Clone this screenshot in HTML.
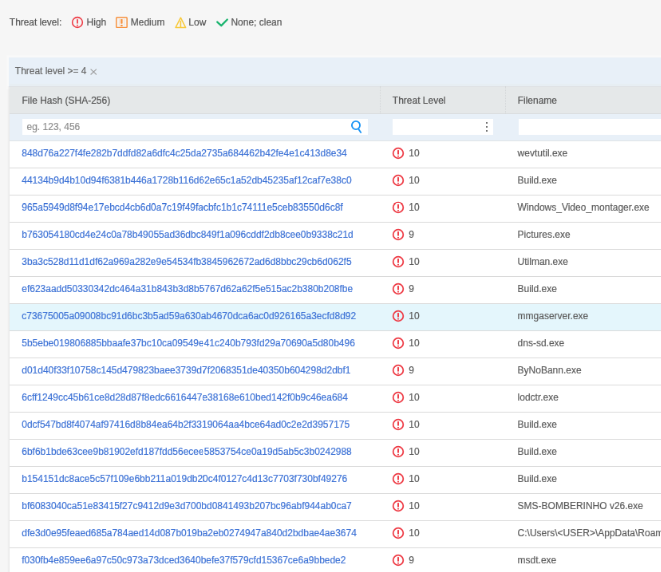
<!DOCTYPE html>
<html><head><meta charset="utf-8">
<style>
*{box-sizing:border-box;margin:0;padding:0}
html,body{width:661px;height:572px;overflow:hidden;background:#f6f6f6}
#wrap{position:absolute;left:0;top:0;width:830px;height:720px;transform:scale(0.798);transform-origin:0 0;will-change:transform;background:#f6f6f6;font-family:"Liberation Sans",sans-serif;font-size:12px;color:#555;overflow:hidden;-webkit-text-stroke-width:0.2px}
.a{position:absolute}
.t{position:absolute;white-space:nowrap;line-height:14px}
</style></head><body><div id="wrap">
<div class="t" style="left:11.86px;top:21.30px;color:#555;transform:scaleY(1.04);transform-origin:0 11.16px;letter-spacing:-0.05px">Threat level:</div>
<svg class="a" style="left:87.12px;top:17.88px" width="20" height="20" viewBox="0 0 20 20"><circle cx="10" cy="10" r="6.36" fill="none" stroke="#ee3a44" stroke-width="1.57"/><rect x="9.14" y="6.14" width="1.73" height="5.36" fill="#ee3a44"/><rect x="9.14" y="12.93" width="1.73" height="1.50" fill="#ee3a44"/></svg>
<div class="t" style="left:108.60px;top:21.30px;color:#555;transform:scaleY(1.04);transform-origin:0 11.16px;">High</div>
<svg class="a" style="left:145.49px;top:20.93px" width="14.91" height="14.16" viewBox="0 0 14.91 14.16"><rect x="0.75" y="0.75" width="13.41" height="12.66" rx="1" fill="none" stroke="#f7923f" stroke-width="1.50"/><rect x="3.89" y="2.88" width="1" height="8.40" fill="#f7923f" opacity="0.25"/><rect x="10.15" y="2.88" width="1" height="8.40" fill="#f7923f" opacity="0.25"/><rect x="6.19" y="2.88" width="2.4" height="5.76" rx="0.6" fill="#f7923f"/><rect x="5.89" y="9.90" width="3" height="2" rx="1" fill="#f7923f"/></svg>
<div class="t" style="left:163.74px;top:21.30px;color:#555;transform:scaleY(1.04);transform-origin:0 11.16px;">Medium</div>
<svg class="a" style="left:215.54px;top:17.54px" width="22" height="20" viewBox="0 0 22 20"><path d="M10.40 4.14 L16.67 16.55 L4.01 16.55 Z" fill="none" stroke="#f8c93a" stroke-width="1.50" stroke-linejoin="round"/><path d="M10.40 7.90 L10.40 16.04" stroke="#f8c93a" stroke-width="1.6"/></svg>
<div class="t" style="left:236.29px;top:21.30px;color:#555;transform:scaleY(1.04);transform-origin:0 11.16px;">Low</div>
<svg class="a" style="left:268.17px;top:17.54px" width="20" height="20" viewBox="0 0 20 20"><path d="M4.26 9.53 L9.27 14.16 L16.79 6.52" fill="none" stroke="#19b46e" stroke-width="2.32" stroke-linecap="round" stroke-linejoin="round"/></svg>
<div class="t" style="left:289.42px;top:21.30px;color:#555;transform:scaleY(1.04);transform-origin:0 11.16px;">None; clean</div>
<div class="a" style="left:11.15px;top:71.68px;width:900px;height:37.32px;background:#e8f0f8;box-shadow:0 0 0 2.5px #f9f9f9"></div>
<div class="t" style="left:18.87px;top:81.82px;color:#666;transform:scaleY(1.04);transform-origin:0 11.16px;letter-spacing:-0.03px">Threat level &gt;= 4</div>
<svg class="a" style="left:112.84px;top:85.78px" width="8.59" height="8.08" viewBox="0 0 8.59 8.08"><path d="M0.6 0.6 L7.99 7.48 M7.99 0.6 L0.6 7.48" stroke="#9d9d9d" stroke-width="1.15"/></svg>
<div class="a" style="left:9.41px;top:108.00px;width:4px;height:900px;background:linear-gradient(to right, rgba(0,0,0,0), rgba(0,0,0,0.035) 45%, rgba(0,0,0,0.085))"></div>
<div class="a" style="left:12.41px;top:104.50px;width:900px;height:3.5px;background:#e7eef3"></div>
<div class="a" style="left:12.41px;top:108.00px;width:900px;height:34.98px;background:#e5e8e9;border-bottom:1px solid #d9dcde;border-top:1px solid #dfe2e4"></div>
<div class="a" style="left:475.69px;top:108.00px;width:1px;height:33.98px;border-left:1px dotted #d3d6d8"></div>
<div class="a" style="left:632.96px;top:108.00px;width:1px;height:33.98px;border-left:1px dotted #d3d6d8"></div>
<div class="t" style="left:27.52px;top:119.04px;color:#555;transform:scaleY(1.04);transform-origin:0 11.16px;">File Hash (SHA-256)</div>
<div class="t" style="left:491.81px;top:119.04px;color:#555;transform:scaleY(1.04);transform-origin:0 11.16px;">Threat Level</div>
<div class="t" style="left:648.70px;top:119.04px;color:#555;transform:scaleY(1.04);transform-origin:0 11.16px;">Filename</div>
<div class="a" style="left:12.41px;top:142.98px;width:900px;height:33.59px;background:#e8f0f8;border-bottom:1px solid #dfe3e6"></div>
<div class="a" style="left:28.45px;top:149.00px;width:432.58px;height:19.67px;background:#fff"></div>
<div class="a" style="left:492.48px;top:149.00px;width:125.38px;height:19.67px;background:#fff"></div>
<div class="a" style="left:649.50px;top:149.00px;width:478.32px;height:19.67px;background:#fff"></div>
<div class="t" style="left:33.53px;top:152.00px;color:#8e8e8e;transform:scaleY(1.04);transform-origin:0 11.16px;">eg. 123, 456</div>
<svg class="a" style="left:436.12px;top:146.64px" width="20" height="20" viewBox="0 0 20 20"><circle cx="10" cy="10" r="5.07" fill="none" stroke="#1793f5" stroke-width="1.88"/><path d="M13.63 15.26 L16.14 19.02" stroke="#1793f5" stroke-width="1.88" stroke-linecap="round"/></svg>
<div class="a" style="left:608.84px;top:152.89px;width:2.5px;height:2.5px;background:#747474"></div>
<div class="a" style="left:608.84px;top:157.77px;width:2.5px;height:2.5px;background:#747474"></div>
<div class="a" style="left:608.84px;top:162.53px;width:2.5px;height:2.5px;background:#747474"></div>
<div class="a" style="left:12.41px;top:176.57px;width:900px;height:34.21px;background:#fff;border-bottom:1px solid #dadada"></div>
<div class="t" style="left:27.27px;top:184.83px;color:#3e73d6;transform:scaleY(1.04);transform-origin:0 11.16px;letter-spacing:-0.014px">848d76a227f4fe282b7ddfd82a6dfc4c25da2735a684462b42fe4e1c413d8e34</div>
<svg class="a" style="left:489.00px;top:181.60px" width="20" height="20" viewBox="0 0 20 20"><circle cx="10" cy="10" r="6.33" fill="none" stroke="#ee3a44" stroke-width="1.75"/><rect x="9.04" y="6.11" width="1.93" height="5.40" fill="#ee3a44"/><rect x="9.04" y="12.95" width="1.93" height="1.51" fill="#ee3a44"/></svg>
<div class="t" style="left:512.36px;top:184.83px;color:#5a5a5a;transform:scaleY(1.04);transform-origin:0 11.16px;">10</div>
<div class="t" style="left:648.57px;top:184.83px;color:#5c5c5c;transform:scaleY(1.04);transform-origin:0 11.16px;">wevtutil.exe</div>
<div class="a" style="left:12.41px;top:210.78px;width:900px;height:34px;background:#fff;border-bottom:1px solid #dadada"></div>
<div class="t" style="left:27.27px;top:218.83px;color:#3e73d6;transform:scaleY(1.04);transform-origin:0 11.16px;letter-spacing:-0.014px">44134b9d4b10d94f6381b446a1728b116d62e65c1a52db45235af12caf7e38c0</div>
<svg class="a" style="left:489.00px;top:215.60px" width="20" height="20" viewBox="0 0 20 20"><circle cx="10" cy="10" r="6.33" fill="none" stroke="#ee3a44" stroke-width="1.75"/><rect x="9.04" y="6.11" width="1.93" height="5.40" fill="#ee3a44"/><rect x="9.04" y="12.95" width="1.93" height="1.51" fill="#ee3a44"/></svg>
<div class="t" style="left:512.36px;top:218.83px;color:#5a5a5a;transform:scaleY(1.04);transform-origin:0 11.16px;">10</div>
<div class="t" style="left:648.57px;top:218.83px;color:#5c5c5c;transform:scaleY(1.04);transform-origin:0 11.16px;">Build.exe</div>
<div class="a" style="left:12.41px;top:244.78px;width:900px;height:34px;background:#fff;border-bottom:1px solid #dadada"></div>
<div class="t" style="left:27.27px;top:252.83px;color:#3e73d6;transform:scaleY(1.04);transform-origin:0 11.16px;letter-spacing:-0.014px">965a5949d8f94e17ebcd4cb6d0a7c19f49facbfc1b1c74111e5ceb83550d6c8f</div>
<svg class="a" style="left:489.00px;top:249.60px" width="20" height="20" viewBox="0 0 20 20"><circle cx="10" cy="10" r="6.33" fill="none" stroke="#ee3a44" stroke-width="1.75"/><rect x="9.04" y="6.11" width="1.93" height="5.40" fill="#ee3a44"/><rect x="9.04" y="12.95" width="1.93" height="1.51" fill="#ee3a44"/></svg>
<div class="t" style="left:512.36px;top:252.83px;color:#5a5a5a;transform:scaleY(1.04);transform-origin:0 11.16px;">10</div>
<div class="t" style="left:648.57px;top:252.83px;color:#5c5c5c;transform:scaleY(1.04);transform-origin:0 11.16px;">Windows_Video_montager.exe</div>
<div class="a" style="left:12.41px;top:278.78px;width:900px;height:34px;background:#fff;border-bottom:1px solid #dadada"></div>
<div class="t" style="left:27.27px;top:286.83px;color:#3e73d6;transform:scaleY(1.04);transform-origin:0 11.16px;letter-spacing:-0.014px">b763054180cd4e24c0a78b49055ad36dbc849f1a096cddf2db8cee0b9338c21d</div>
<svg class="a" style="left:489.00px;top:283.60px" width="20" height="20" viewBox="0 0 20 20"><circle cx="10" cy="10" r="6.33" fill="none" stroke="#ee3a44" stroke-width="1.75"/><rect x="9.04" y="6.11" width="1.93" height="5.40" fill="#ee3a44"/><rect x="9.04" y="12.95" width="1.93" height="1.51" fill="#ee3a44"/></svg>
<div class="t" style="left:512.36px;top:286.83px;color:#5a5a5a;transform:scaleY(1.04);transform-origin:0 11.16px;">9</div>
<div class="t" style="left:648.57px;top:286.83px;color:#5c5c5c;transform:scaleY(1.04);transform-origin:0 11.16px;">Pictures.exe</div>
<div class="a" style="left:12.41px;top:312.78px;width:900px;height:34px;background:#fff;border-bottom:1px solid #dadada"></div>
<div class="t" style="left:27.27px;top:320.83px;color:#3e73d6;transform:scaleY(1.04);transform-origin:0 11.16px;letter-spacing:-0.014px">3ba3c528d11d1df62a969a282e9e54534fb3845962672ad6d8bbc29cb6d062f5</div>
<svg class="a" style="left:489.00px;top:317.60px" width="20" height="20" viewBox="0 0 20 20"><circle cx="10" cy="10" r="6.33" fill="none" stroke="#ee3a44" stroke-width="1.75"/><rect x="9.04" y="6.11" width="1.93" height="5.40" fill="#ee3a44"/><rect x="9.04" y="12.95" width="1.93" height="1.51" fill="#ee3a44"/></svg>
<div class="t" style="left:512.36px;top:320.83px;color:#5a5a5a;transform:scaleY(1.04);transform-origin:0 11.16px;">10</div>
<div class="t" style="left:648.57px;top:320.83px;color:#5c5c5c;transform:scaleY(1.04);transform-origin:0 11.16px;">Utilman.exe</div>
<div class="a" style="left:12.41px;top:346.78px;width:900px;height:34px;background:#fff;border-bottom:1px solid #dadada"></div>
<div class="t" style="left:27.27px;top:354.83px;color:#3e73d6;transform:scaleY(1.04);transform-origin:0 11.16px;letter-spacing:-0.014px">ef623aadd50330342dc464a31b843b3d8b5767d62a62f5e515ac2b380b208fbe</div>
<svg class="a" style="left:489.00px;top:351.60px" width="20" height="20" viewBox="0 0 20 20"><circle cx="10" cy="10" r="6.33" fill="none" stroke="#ee3a44" stroke-width="1.75"/><rect x="9.04" y="6.11" width="1.93" height="5.40" fill="#ee3a44"/><rect x="9.04" y="12.95" width="1.93" height="1.51" fill="#ee3a44"/></svg>
<div class="t" style="left:512.36px;top:354.83px;color:#5a5a5a;transform:scaleY(1.04);transform-origin:0 11.16px;">9</div>
<div class="t" style="left:648.57px;top:354.83px;color:#5c5c5c;transform:scaleY(1.04);transform-origin:0 11.16px;">Build.exe</div>
<div class="a" style="left:12.41px;top:380.78px;width:900px;height:34px;background:#e4f6fc;border-bottom:1px solid #dadada"></div>
<div class="t" style="left:27.27px;top:388.83px;color:#3e73d6;transform:scaleY(1.04);transform-origin:0 11.16px;letter-spacing:-0.014px">c73675005a09008bc91d6bc3b5ad59a630ab4670dca6ac0d926165a3ecfd8d92</div>
<svg class="a" style="left:489.00px;top:385.60px" width="20" height="20" viewBox="0 0 20 20"><circle cx="10" cy="10" r="6.33" fill="none" stroke="#ee3a44" stroke-width="1.75"/><rect x="9.04" y="6.11" width="1.93" height="5.40" fill="#ee3a44"/><rect x="9.04" y="12.95" width="1.93" height="1.51" fill="#ee3a44"/></svg>
<div class="t" style="left:512.36px;top:388.83px;color:#5a5a5a;transform:scaleY(1.04);transform-origin:0 11.16px;">10</div>
<div class="t" style="left:648.57px;top:388.83px;color:#5c5c5c;transform:scaleY(1.04);transform-origin:0 11.16px;">mmgaserver.exe</div>
<div class="a" style="left:12.41px;top:414.78px;width:900px;height:34px;background:#fff;border-bottom:1px solid #dadada"></div>
<div class="t" style="left:27.27px;top:422.83px;color:#3e73d6;transform:scaleY(1.04);transform-origin:0 11.16px;letter-spacing:-0.014px">5b5ebe019806885bbaafe37bc10ca09549e41c240b793fd29a70690a5d80b496</div>
<svg class="a" style="left:489.00px;top:419.60px" width="20" height="20" viewBox="0 0 20 20"><circle cx="10" cy="10" r="6.33" fill="none" stroke="#ee3a44" stroke-width="1.75"/><rect x="9.04" y="6.11" width="1.93" height="5.40" fill="#ee3a44"/><rect x="9.04" y="12.95" width="1.93" height="1.51" fill="#ee3a44"/></svg>
<div class="t" style="left:512.36px;top:422.83px;color:#5a5a5a;transform:scaleY(1.04);transform-origin:0 11.16px;">10</div>
<div class="t" style="left:648.57px;top:422.83px;color:#5c5c5c;transform:scaleY(1.04);transform-origin:0 11.16px;">dns-sd.exe</div>
<div class="a" style="left:12.41px;top:448.78px;width:900px;height:34px;background:#fff;border-bottom:1px solid #dadada"></div>
<div class="t" style="left:27.27px;top:456.83px;color:#3e73d6;transform:scaleY(1.04);transform-origin:0 11.16px;letter-spacing:-0.014px">d01d40f33f10758c145d479823baee3739d7f2068351de40350b604298d2dbf1</div>
<svg class="a" style="left:489.00px;top:453.60px" width="20" height="20" viewBox="0 0 20 20"><circle cx="10" cy="10" r="6.33" fill="none" stroke="#ee3a44" stroke-width="1.75"/><rect x="9.04" y="6.11" width="1.93" height="5.40" fill="#ee3a44"/><rect x="9.04" y="12.95" width="1.93" height="1.51" fill="#ee3a44"/></svg>
<div class="t" style="left:512.36px;top:456.83px;color:#5a5a5a;transform:scaleY(1.04);transform-origin:0 11.16px;">9</div>
<div class="t" style="left:648.57px;top:456.83px;color:#5c5c5c;transform:scaleY(1.04);transform-origin:0 11.16px;">ByNoBann.exe</div>
<div class="a" style="left:12.41px;top:482.78px;width:900px;height:34px;background:#fff;border-bottom:1px solid #dadada"></div>
<div class="t" style="left:27.27px;top:490.83px;color:#3e73d6;transform:scaleY(1.04);transform-origin:0 11.16px;letter-spacing:-0.014px">6cff1249cc45b61ce8d28d87f8edc6616447e38168e610bed142f0b9c46ea684</div>
<svg class="a" style="left:489.00px;top:487.60px" width="20" height="20" viewBox="0 0 20 20"><circle cx="10" cy="10" r="6.33" fill="none" stroke="#ee3a44" stroke-width="1.75"/><rect x="9.04" y="6.11" width="1.93" height="5.40" fill="#ee3a44"/><rect x="9.04" y="12.95" width="1.93" height="1.51" fill="#ee3a44"/></svg>
<div class="t" style="left:512.36px;top:490.83px;color:#5a5a5a;transform:scaleY(1.04);transform-origin:0 11.16px;">10</div>
<div class="t" style="left:648.57px;top:490.83px;color:#5c5c5c;transform:scaleY(1.04);transform-origin:0 11.16px;">lodctr.exe</div>
<div class="a" style="left:12.41px;top:516.78px;width:900px;height:34px;background:#fff;border-bottom:1px solid #dadada"></div>
<div class="t" style="left:27.27px;top:524.83px;color:#3e73d6;transform:scaleY(1.04);transform-origin:0 11.16px;letter-spacing:-0.014px">0dcf547bd8f4074af97416d8b84ea64b2f3319064aa4bce64ad0c2e2d3957175</div>
<svg class="a" style="left:489.00px;top:521.60px" width="20" height="20" viewBox="0 0 20 20"><circle cx="10" cy="10" r="6.33" fill="none" stroke="#ee3a44" stroke-width="1.75"/><rect x="9.04" y="6.11" width="1.93" height="5.40" fill="#ee3a44"/><rect x="9.04" y="12.95" width="1.93" height="1.51" fill="#ee3a44"/></svg>
<div class="t" style="left:512.36px;top:524.83px;color:#5a5a5a;transform:scaleY(1.04);transform-origin:0 11.16px;">10</div>
<div class="t" style="left:648.57px;top:524.83px;color:#5c5c5c;transform:scaleY(1.04);transform-origin:0 11.16px;">Build.exe</div>
<div class="a" style="left:12.41px;top:550.78px;width:900px;height:34px;background:#fff;border-bottom:1px solid #dadada"></div>
<div class="t" style="left:27.27px;top:558.83px;color:#3e73d6;transform:scaleY(1.04);transform-origin:0 11.16px;letter-spacing:-0.014px">6bf6b1bde63cee9b81902efd187fdd56ecee5853754ce0a19d5ab5c3b0242988</div>
<svg class="a" style="left:489.00px;top:555.60px" width="20" height="20" viewBox="0 0 20 20"><circle cx="10" cy="10" r="6.33" fill="none" stroke="#ee3a44" stroke-width="1.75"/><rect x="9.04" y="6.11" width="1.93" height="5.40" fill="#ee3a44"/><rect x="9.04" y="12.95" width="1.93" height="1.51" fill="#ee3a44"/></svg>
<div class="t" style="left:512.36px;top:558.83px;color:#5a5a5a;transform:scaleY(1.04);transform-origin:0 11.16px;">10</div>
<div class="t" style="left:648.57px;top:558.83px;color:#5c5c5c;transform:scaleY(1.04);transform-origin:0 11.16px;">Build.exe</div>
<div class="a" style="left:12.41px;top:584.78px;width:900px;height:34px;background:#fff;border-bottom:1px solid #dadada"></div>
<div class="t" style="left:27.27px;top:592.83px;color:#3e73d6;transform:scaleY(1.04);transform-origin:0 11.16px;letter-spacing:-0.014px">b154151dc8ace5c57f109e6bb211a019db20c4f0127c4d13c7703f730bf49276</div>
<svg class="a" style="left:489.00px;top:589.60px" width="20" height="20" viewBox="0 0 20 20"><circle cx="10" cy="10" r="6.33" fill="none" stroke="#ee3a44" stroke-width="1.75"/><rect x="9.04" y="6.11" width="1.93" height="5.40" fill="#ee3a44"/><rect x="9.04" y="12.95" width="1.93" height="1.51" fill="#ee3a44"/></svg>
<div class="t" style="left:512.36px;top:592.83px;color:#5a5a5a;transform:scaleY(1.04);transform-origin:0 11.16px;">10</div>
<div class="t" style="left:648.57px;top:592.83px;color:#5c5c5c;transform:scaleY(1.04);transform-origin:0 11.16px;">Build.exe</div>
<div class="a" style="left:12.41px;top:618.78px;width:900px;height:34px;background:#fff;border-bottom:1px solid #dadada"></div>
<div class="t" style="left:27.27px;top:626.83px;color:#3e73d6;transform:scaleY(1.04);transform-origin:0 11.16px;letter-spacing:-0.014px">bf6083040ca51e83415f27c9412d9e3d700bd0841493b207bc96abf944ab0ca7</div>
<svg class="a" style="left:489.00px;top:623.60px" width="20" height="20" viewBox="0 0 20 20"><circle cx="10" cy="10" r="6.33" fill="none" stroke="#ee3a44" stroke-width="1.75"/><rect x="9.04" y="6.11" width="1.93" height="5.40" fill="#ee3a44"/><rect x="9.04" y="12.95" width="1.93" height="1.51" fill="#ee3a44"/></svg>
<div class="t" style="left:512.36px;top:626.83px;color:#5a5a5a;transform:scaleY(1.04);transform-origin:0 11.16px;">10</div>
<div class="t" style="left:648.57px;top:626.83px;color:#5c5c5c;transform:scaleY(1.04);transform-origin:0 11.16px;">SMS-BOMBERINHO v26.exe</div>
<div class="a" style="left:12.41px;top:652.78px;width:900px;height:34px;background:#fff;border-bottom:1px solid #dadada"></div>
<div class="t" style="left:27.27px;top:660.83px;color:#3e73d6;transform:scaleY(1.04);transform-origin:0 11.16px;letter-spacing:-0.014px">dfe3d0e95feaed685a784aed14d087b019ba2eb0274947a840d2bdbae4ae3674</div>
<svg class="a" style="left:489.00px;top:657.60px" width="20" height="20" viewBox="0 0 20 20"><circle cx="10" cy="10" r="6.33" fill="none" stroke="#ee3a44" stroke-width="1.75"/><rect x="9.04" y="6.11" width="1.93" height="5.40" fill="#ee3a44"/><rect x="9.04" y="12.95" width="1.93" height="1.51" fill="#ee3a44"/></svg>
<div class="t" style="left:512.36px;top:660.83px;color:#5a5a5a;transform:scaleY(1.04);transform-origin:0 11.16px;">10</div>
<div class="t" style="left:648.57px;top:660.83px;color:#5c5c5c;transform:scaleY(1.04);transform-origin:0 11.16px;">C:\Users\&lt;USER&gt;\AppData\Roaming\Microsoft\Windows\svchost.exe</div>
<div class="a" style="left:12.41px;top:686.78px;width:900px;height:34px;background:#fff;border-bottom:1px solid #dadada"></div>
<div class="t" style="left:27.27px;top:694.83px;color:#3e73d6;transform:scaleY(1.04);transform-origin:0 11.16px;letter-spacing:-0.014px">f030fb4e859ee6a97c50c973a73dced3640befe37f579cfd15367ce6a9bbede2</div>
<svg class="a" style="left:489.00px;top:691.60px" width="20" height="20" viewBox="0 0 20 20"><circle cx="10" cy="10" r="6.33" fill="none" stroke="#ee3a44" stroke-width="1.75"/><rect x="9.04" y="6.11" width="1.93" height="5.40" fill="#ee3a44"/><rect x="9.04" y="12.95" width="1.93" height="1.51" fill="#ee3a44"/></svg>
<div class="t" style="left:512.36px;top:694.83px;color:#5a5a5a;transform:scaleY(1.04);transform-origin:0 11.16px;">9</div>
<div class="t" style="left:648.57px;top:694.83px;color:#5c5c5c;transform:scaleY(1.04);transform-origin:0 11.16px;">msdt.exe</div>
</div></body></html>
